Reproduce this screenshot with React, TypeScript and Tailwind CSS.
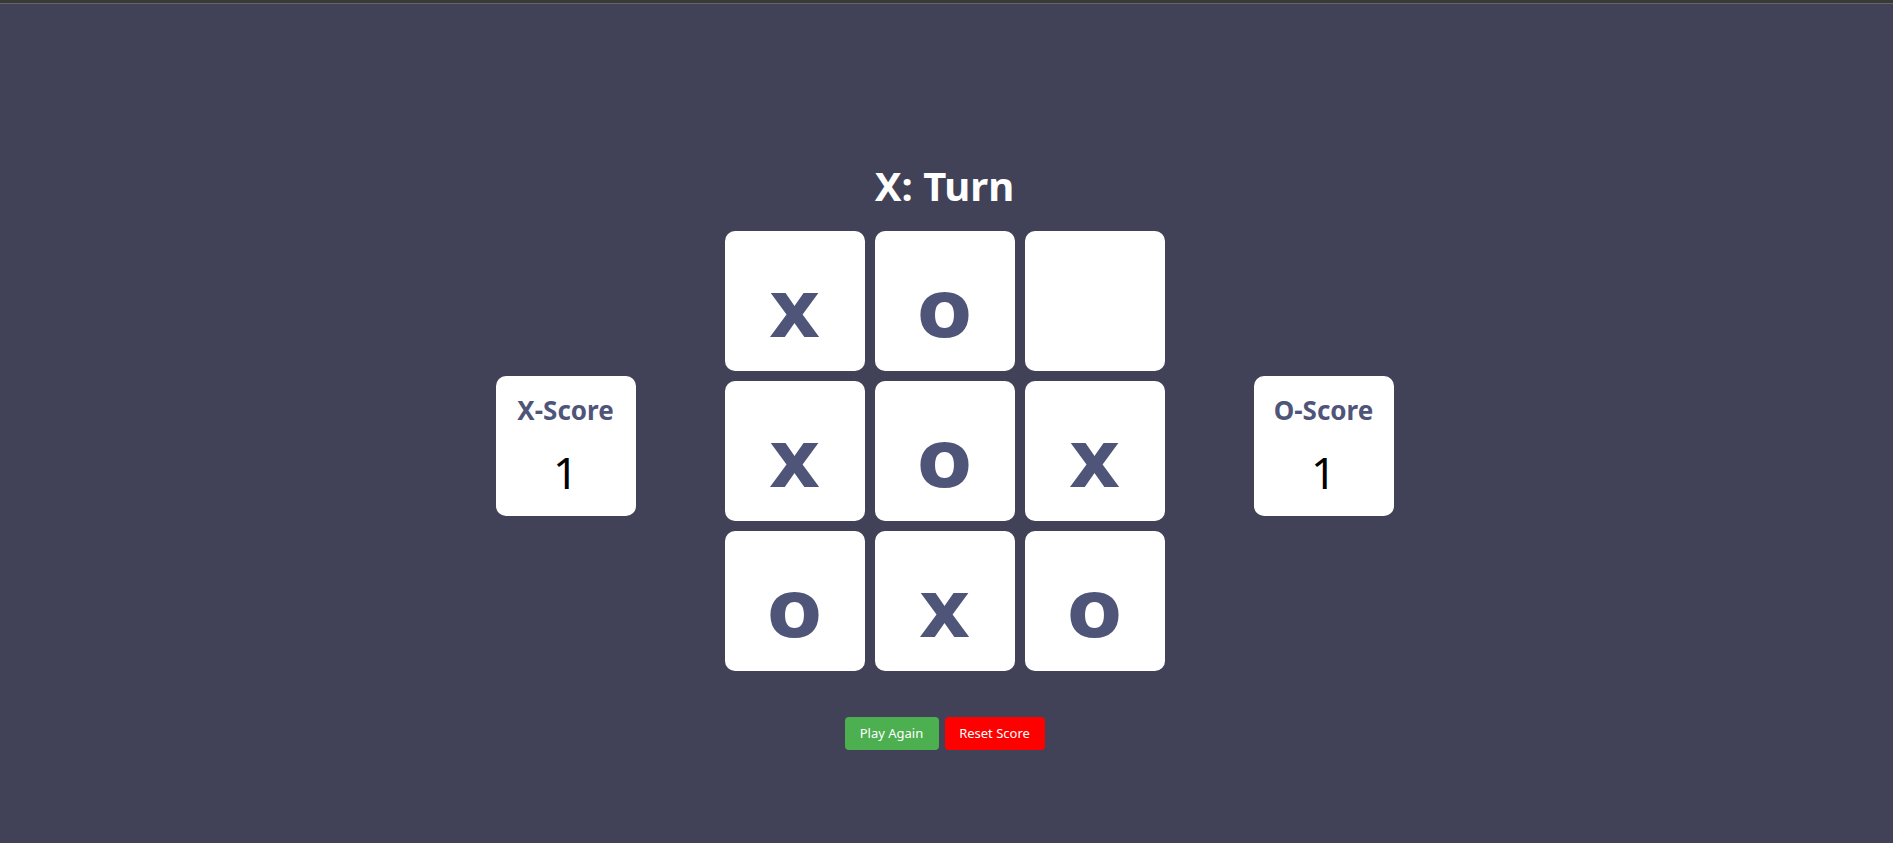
const board = ['x', 'o', '', 'x', 'o', 'x', 'o', 'x', 'o'];

const ScoreCard = ({ label, score }: { label: string; score: number }) => (
  <div className="w-[140px] h-[140px] mb-[10px] bg-white rounded-[10px] flex flex-col items-center">
    <div className="mt-[16px] text-[26px] leading-[36px] font-bold text-[#4f5579]">{label}</div>
    <div className="mt-[18px] text-[44px] leading-[52px] text-black">{score}</div>
  </div>
);

export default function App() {
  return (
    <div className="min-h-[843px] bg-[#414257] font-['Noto_Sans','Open_Sans',sans-serif]">
      <div className="h-[4px] bg-[#393939] border-b border-[#62665f]" />
      <div className="flex flex-col items-center pt-[158px] pr-[4px]">
        <h1 className="text-[40px] leading-[48px] font-bold text-white">X: Turn</h1>
        <div className="mt-[21px] flex items-center gap-[89px]">
          <ScoreCard label="X-Score" score={1} />
          <div className="grid grid-cols-3 gap-[10px]">
            {board.map((v, i) => (
              <button
                key={i}
                className="w-[140px] h-[140px] bg-white rounded-[10px] flex items-center justify-center pt-[18px] text-[80px] leading-none font-bold text-[#4f5579] font-['DejaVu_Sans',sans-serif]"
              >
                {v}
              </button>
            ))}
          </div>
          <ScoreCard label="O-Score" score={1} />
        </div>
        <div className="mt-[46px] flex gap-[6px]">
          <button className="w-[94px] h-[33px] rounded-[4px] bg-[#4caf50] text-white text-[13px]">Play Again</button>
          <button className="w-[100px] h-[33px] rounded-[4px] bg-[#ff0000] text-white text-[13px]">Reset Score</button>
        </div>
      </div>
    </div>
  );
}
